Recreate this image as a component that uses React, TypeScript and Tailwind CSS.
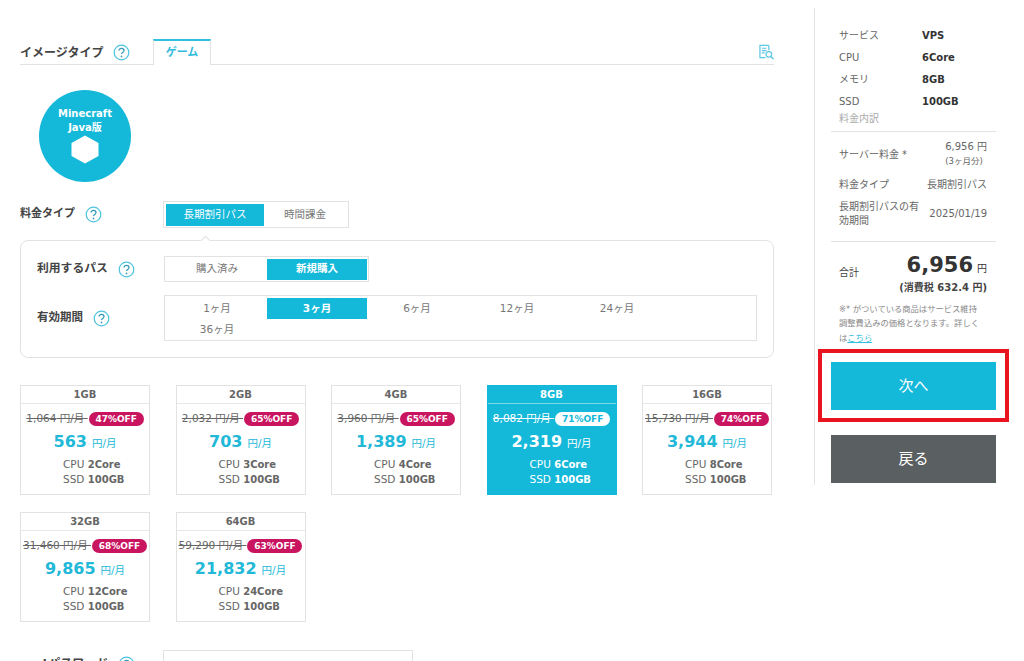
import React from "react";

const plans = [
  { gb: "1GB", old: "1,064", off: "47%OFF", price: "563", cpu: "2Core" },
  { gb: "2GB", old: "2,032", off: "65%OFF", price: "703", cpu: "3Core" },
  { gb: "4GB", old: "3,960", off: "65%OFF", price: "1,389", cpu: "4Core" },
  { gb: "8GB", old: "8,082", off: "71%OFF", price: "2,319", cpu: "6Core", active: true },
  { gb: "16GB", old: "15,730", off: "74%OFF", price: "3,944", cpu: "8Core" },
  { gb: "32GB", old: "31,460", off: "68%OFF", price: "9,865", cpu: "12Core" },
  { gb: "64GB", old: "59,290", off: "63%OFF", price: "21,832", cpu: "24Core" },
];

const periods = ["1ヶ月", "3ヶ月", "6ヶ月", "12ヶ月", "24ヶ月", "36ヶ月"];

const Help = () => (
  <svg width="17" height="17" viewBox="0 0 17 17" className="shrink-0">
    <circle cx="8.5" cy="8.5" r="7.3" fill="none" stroke="#4fc3e0" strokeWidth="1.2" />
    <path d="M6 6.6c0-1.5 1.1-2.3 2.5-2.3s2.5.9 2.5 2.2c0 1.9-2.5 1.9-2.5 3.6" fill="none" stroke="#3a9db8" strokeWidth="1.3" />
    <circle cx="8.5" cy="12.4" r="0.9" fill="#3a9db8" />
  </svg>
);

const Segment = ({ label, active }: { label: string; active?: boolean }) => (
  <div
    className={`flex h-[21px] w-[100px] items-center justify-center text-[10.5px] ${
      active ? "bg-[#14b8d9] font-bold text-white" : "text-[#777]"
    }`}
  >
    {label}
  </div>
);

const PlanCard = ({ plan }: { plan: (typeof plans)[number] }) => (
  <div
    className={`h-[110px] w-[130px] border ${
      plan.active ? "border-[#14b8d9] bg-[#14b8d9] text-white" : "border-[#e2e2e2] bg-white text-[#666]"
    }`}
  >
    <div
      className={`flex h-[18px] items-center justify-center border-b text-[10px] font-bold ${
        plan.active ? "border-[#7fd8ea]" : "border-[#e8e8e8]"
      }`}
    >
      {plan.gb}
    </div>
    <div className="mt-[8px] flex h-[14px] items-center justify-center gap-[1px] whitespace-nowrap">
      <span className="text-[10.5px] line-through">{plan.old} 円/月&nbsp;</span>
      <span
        className={`w-[55px] shrink-0 rounded-full text-center text-[9px] leading-[14px] font-bold ${
          plan.active ? "bg-white text-[#14b8d9]" : "bg-[#c9145f] text-white"
        }`}
      >
        {plan.off}
      </span>
    </div>
    <div
      className={`mt-[3px] flex h-[26px] items-center justify-center gap-[5px] whitespace-nowrap ${
        plan.active ? "text-white" : "text-[#22b8d8]"
      }`}
    >
      <span className="text-[16px] font-bold">{plan.price}</span>
      <span className="mt-[3px] text-[10.5px]">円/月</span>
    </div>
    <div className="mt-[2px] pl-[42px] text-[10.5px] leading-[14px] whitespace-nowrap">
      <div>
        CPU <b className="text-[10px]">{plan.cpu}</b>
      </div>
      <div>
        SSD <b className="text-[10px]">100GB</b>
      </div>
    </div>
  </div>
);

const Spec = ({ name, value }: { name: string; value: string }) => (
  <div className="flex h-[22.2px] items-center text-[10px] text-[#666]">
    <span className="w-[83px]">{name}</span>
    <b className="text-[#333]">{value}</b>
  </div>
);

export default function App() {
  return (
    <div
      className="flex h-[661px] w-[1024px] overflow-hidden bg-white text-[#555]"
      style={{ fontFamily: '"DejaVu Sans", "Noto Sans CJK JP", sans-serif' }}
    >
      <main className="ml-[20px] w-[754px] shrink-0 pt-[39px]">
        <div className="flex h-[26px] items-stretch border-b border-[#e2e2e2]">
          <div className="flex w-[133px] items-center gap-[9px] pt-[2px] text-[12px] font-bold text-[#444]">
            イメージタイプ <Help />
          </div>
          <div className="mb-[-1px] flex w-[58px] items-center justify-center border-x border-t-2 border-x-[#e2e2e2] border-t-[#2fc0e0] bg-white text-[11px] font-bold text-[#33bcdc]">
            ゲーム
          </div>
          <div className="ml-auto flex items-center">
            <svg width="15" height="16" viewBox="0 0 16 16" fill="none" stroke="#5cc7e2" strokeWidth="1.3">
              <path d="M10.5 1H1v13h6" />
              <path d="M10.5 1v5" />
              <path d="M3 4h5M3 6.5h5M3 9h3" />
              <circle cx="10.5" cy="10.5" r="3" />
              <path d="M12.7 12.7 15.5 15.5" strokeWidth="1.6" />
            </svg>
          </div>
        </div>

        <div className="mt-[25px] ml-[19px] flex h-[92px] w-[92px] flex-col items-center rounded-full bg-[#14b8d9] pt-[17px] text-white">
          <div className="text-center text-[10px] leading-[14px] font-bold">
            Minecraft
            <br />
            Java版
          </div>
          <svg width="28" height="29" viewBox="0 0 28 29">
            <path d="M14 0.5 27.5 8v13L14 28.5.5 21V8z" fill="#fff" />
          </svg>
        </div>

        <div className="mt-[19px] flex items-center">
          <div className="flex w-[143px] items-center gap-[10px] text-[11px] font-bold text-[#444]">
            料金タイプ <Help />
          </div>
          <div className="flex h-[27px] items-center border border-[#e2e2e2] px-[2px]">
            <div className="flex h-[22px] w-[98px] items-center justify-center bg-[#14b8d9] text-[10.5px] text-white">
              長期割引パス
            </div>
            <div className="w-[82px] text-center text-[10.5px] text-[#777]">時間課金</div>
          </div>
        </div>

        <div className="relative mt-[12px] h-[118px] rounded-[8px] border border-[#e2e2e2] pt-[15px] pl-[16px]">
          <div className="absolute top-[-4px] left-[181px] h-[7px] w-[7px] rotate-45 border-t border-l border-[#e2e2e2] bg-white" />
          <div className="flex items-center">
            <div className="flex w-[127px] items-center gap-[10px] text-[11.8px] font-bold text-[#444]">
              利用するパス <Help />
            </div>
            <div className="flex h-[26px] items-center border border-[#e2e2e2] pr-[1px] pl-[2px]">
              <Segment label="購入済み" />
              <Segment label="新規購入" active />
            </div>
          </div>
          <div className="mt-[13px] flex items-center">
            <div className="flex w-[127px] items-center gap-[10px] text-[11.5px] font-bold text-[#444]">
              有効期間 <Help />
            </div>
            <div className="flex h-[46px] w-[593px] flex-wrap content-start border border-[#e2e2e2] px-[2px] pt-[2px]">
              {periods.map(p => (
                <Segment key={p} label={p} active={p === "3ヶ月"} />
              ))}
            </div>
          </div>
        </div>

        <div className="mt-[27px] grid w-[753px] grid-cols-[repeat(5,130px)] gap-x-[25.5px] gap-y-[17px]">
          {plans.map(plan => (
            <PlanCard key={plan.gb} plan={plan} />
          ))}
        </div>

        <div className="mt-[28px] flex items-start">
          <div className="flex w-[143px] items-center gap-[10px] pt-[5px] text-[12px] font-bold text-[#444]">
            rootパスワード <Help />
          </div>
          <div className="h-[40px] w-[250px] border border-[#e2e2e2]" />
        </div>
      </main>

      <aside className="relative mt-[8px] ml-[40px] h-[477px] w-[196px] shrink-0 border-l border-[#e2e2e2] pt-[16px] pl-[16px]">
        <div className="w-[165px]">
          <div className="px-[8px]">
            <Spec name="サービス" value="VPS" />
            <Spec name="CPU" value="6Core" />
            <Spec name="メモリ" value="8GB" />
            <Spec name="SSD" value="100GB" />
            <div className="mt-[-1px] text-[10px] leading-[14px] text-[#aaa]">料金内訳</div>
          </div>
          <div className="mt-[5px] border-t border-[#e2e2e2] pt-[8px] pr-[9px] pb-[13px] pl-[8px] text-[10px] text-[#666]">
            <div className="flex items-center justify-between">
              <span>サーバー料金 *</span>
              <div>
                <div className="leading-[14px]">6,956 円</div>
                <div className="text-[8.5px] leading-[15px] whitespace-nowrap">(3ヶ月分)</div>
              </div>
            </div>
            <div className="mt-[9px] flex items-center justify-between leading-[14px]">
              <span>料金タイプ</span>
              <span>長期割引パス</span>
            </div>
            <div className="mt-[8px] flex items-center justify-between leading-[14px]">
              <span className="w-[84px]">長期割引パスの有効期間</span>
              <span>2025/01/19</span>
            </div>
          </div>
          <div className="border-t border-[#e2e2e2] pt-[8px] pr-[9px] pl-[8px]">
            <div className="flex items-end justify-between">
              <span className="text-[10px] text-[#444]">合計</span>
              <div className="text-[#333]">
                <span className="text-[21px] leading-[30px] font-bold">6,956</span>
                <span className="ml-[4px] text-[10px]">円</span>
              </div>
            </div>
            <div className="text-right text-[10px] leading-[16px] font-bold text-[#444]">(消費税 632.4 円)</div>
            <p className="mt-[6px] text-[8.3px] leading-[14.5px] text-[#888]">
              ※* がついている商品はサービス維持
              <br />
              調整費込みの価格となります。詳しく
              <br />
              は<span className="text-[#33bcdc] underline">こちら</span>
            </p>
          </div>
          <div className="relative mt-[17px]">
            <div className="absolute top-[-13px] right-[-13px] bottom-[-12px] left-[-13px] border-4 border-[#e8141f]" />
            <div className="flex h-[48px] items-center justify-center bg-[#14b8d9] text-[15px] text-white">次へ</div>
          </div>
          <div className="mt-[25px] flex h-[48px] items-center justify-center bg-[#5a6062] text-[15px] text-white">
            戻る
          </div>
        </div>
      </aside>
    </div>
  );
}
